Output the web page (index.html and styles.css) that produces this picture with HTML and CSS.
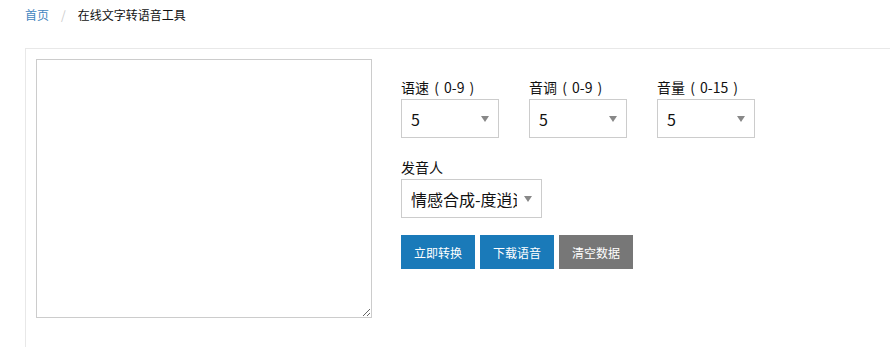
FILE: index.html
```html
<!DOCTYPE html>
<html lang="zh-CN">
<head>
<meta charset="utf-8">
<title>在线文字转语音工具</title>
<link rel="stylesheet" href="styles.css">
</head>
<body>
<nav class="crumb">
  <a class="crumb-link" href="#">首页</a>
  <span class="crumb-sep">/</span>
  <span class="crumb-cur">在线文字转语音工具</span>
</nav>
<div class="panel">
  <textarea class="text-in"></textarea>
  <div class="controls">
    <div class="row">
      <div class="field">
        <label class="lbl">语速 ( 0-9 )</label>
        <div class="sel-wrap sm"><select class="sel"><option>5</option></select></div>
      </div>
      <div class="field">
        <label class="lbl">音调 ( 0-9 )</label>
        <div class="sel-wrap sm"><select class="sel"><option>5</option></select></div>
      </div>
      <div class="field">
        <label class="lbl">音量 ( 0-15 )</label>
        <div class="sel-wrap sm"><select class="sel"><option>5</option></select></div>
      </div>
    </div>
    <div class="field voice">
      <label class="lbl">发音人</label>
      <div class="sel-wrap lg"><select class="sel"><option>情感合成-度逍遥</option></select></div>
    </div>
    <div class="btns">
      <button class="btn blue">立即转换</button>
      <button class="btn blue">下载语音</button>
      <button class="btn gray">清空数据</button>
    </div>
  </div>
</div>
</body>
</html>
```
FILE: styles.css
```css
html, body {
  margin: 0;
  padding: 0;
  background: #fff;
  font-family: "Noto Sans CJK SC", "Liberation Sans", sans-serif;
  color: #222;
}
.crumb {
  height: 48px;
  padding: 6px 0 0 25px;
  box-sizing: border-box;
  font-size: 12px;
  line-height: 18px;
  display: flex;
}
.crumb-link {
  color: #3f86c0;
  text-decoration: none;
}
.crumb-sep {
  color: #ccc;
  margin: 0 12px 0 12px;
}
.crumb-cur {
  color: #111;
}
.panel {
  margin-left: 25px;
  border-left: 1px solid #e8e8e8;
  border-top: 1px solid #e8e8e8;
  background: #fff;
  padding: 10px 0 40px 10px;
  display: flex;
  align-items: flex-start;
}
.text-in {
  width: 336px;
  height: 259px;
  box-sizing: border-box;
  border: 1px solid #ccc;
  background: #fff;
  margin: 0;
  padding: 6px;
  resize: both;
  flex: none;
}
.controls {
  margin-left: 29px;
  padding-top: 18px;
  display: flex;
  flex-direction: column;
}
.row {
  display: flex;
  gap: 30px;
}
.field {
  display: flex;
  flex-direction: column;
}
.lbl {
  font-size: 14px;
  line-height: 20px;
  height: 22px;
  color: #111;
  word-spacing: 2px;
}
.voice {
  margin-top: 19px;
}
.sel-wrap {
  position: relative;
  height: 39px;
}
.sel-wrap.sm { width: 98px; }
.sel-wrap.lg { width: 141px; }
.sel-wrap::after {
  content: "";
  position: absolute;
  right: 10px;
  top: 17px;
  border-left: 4px solid transparent;
  border-right: 4px solid transparent;
  border-top: 6px solid #888;
  pointer-events: none;
}
.sel {
  -webkit-appearance: none;
  appearance: none;
  width: 100%;
  height: 100%;
  box-sizing: border-box;
  border: 1px solid #ccc;
  border-radius: 0;
  background: #fff;
  font-family: "Noto Sans CJK SC", "Liberation Sans", sans-serif;
  font-size: 16px;
  color: #111;
  padding: 0 24px 0 9px;
  margin: 0;
}
.btns {
  display: flex;
  gap: 5px;
  margin-top: 17px;
}
.btn {
  width: 74px;
  height: 34px;
  border: none;
  border-radius: 0;
  color: #fff;
  font-family: "Noto Sans CJK SC", "Liberation Sans", sans-serif;
  font-size: 12px;
  padding: 0;
  cursor: pointer;
}
.btn.blue { background: #1a7ab9; }
.btn.gray { background: #777; }
```
